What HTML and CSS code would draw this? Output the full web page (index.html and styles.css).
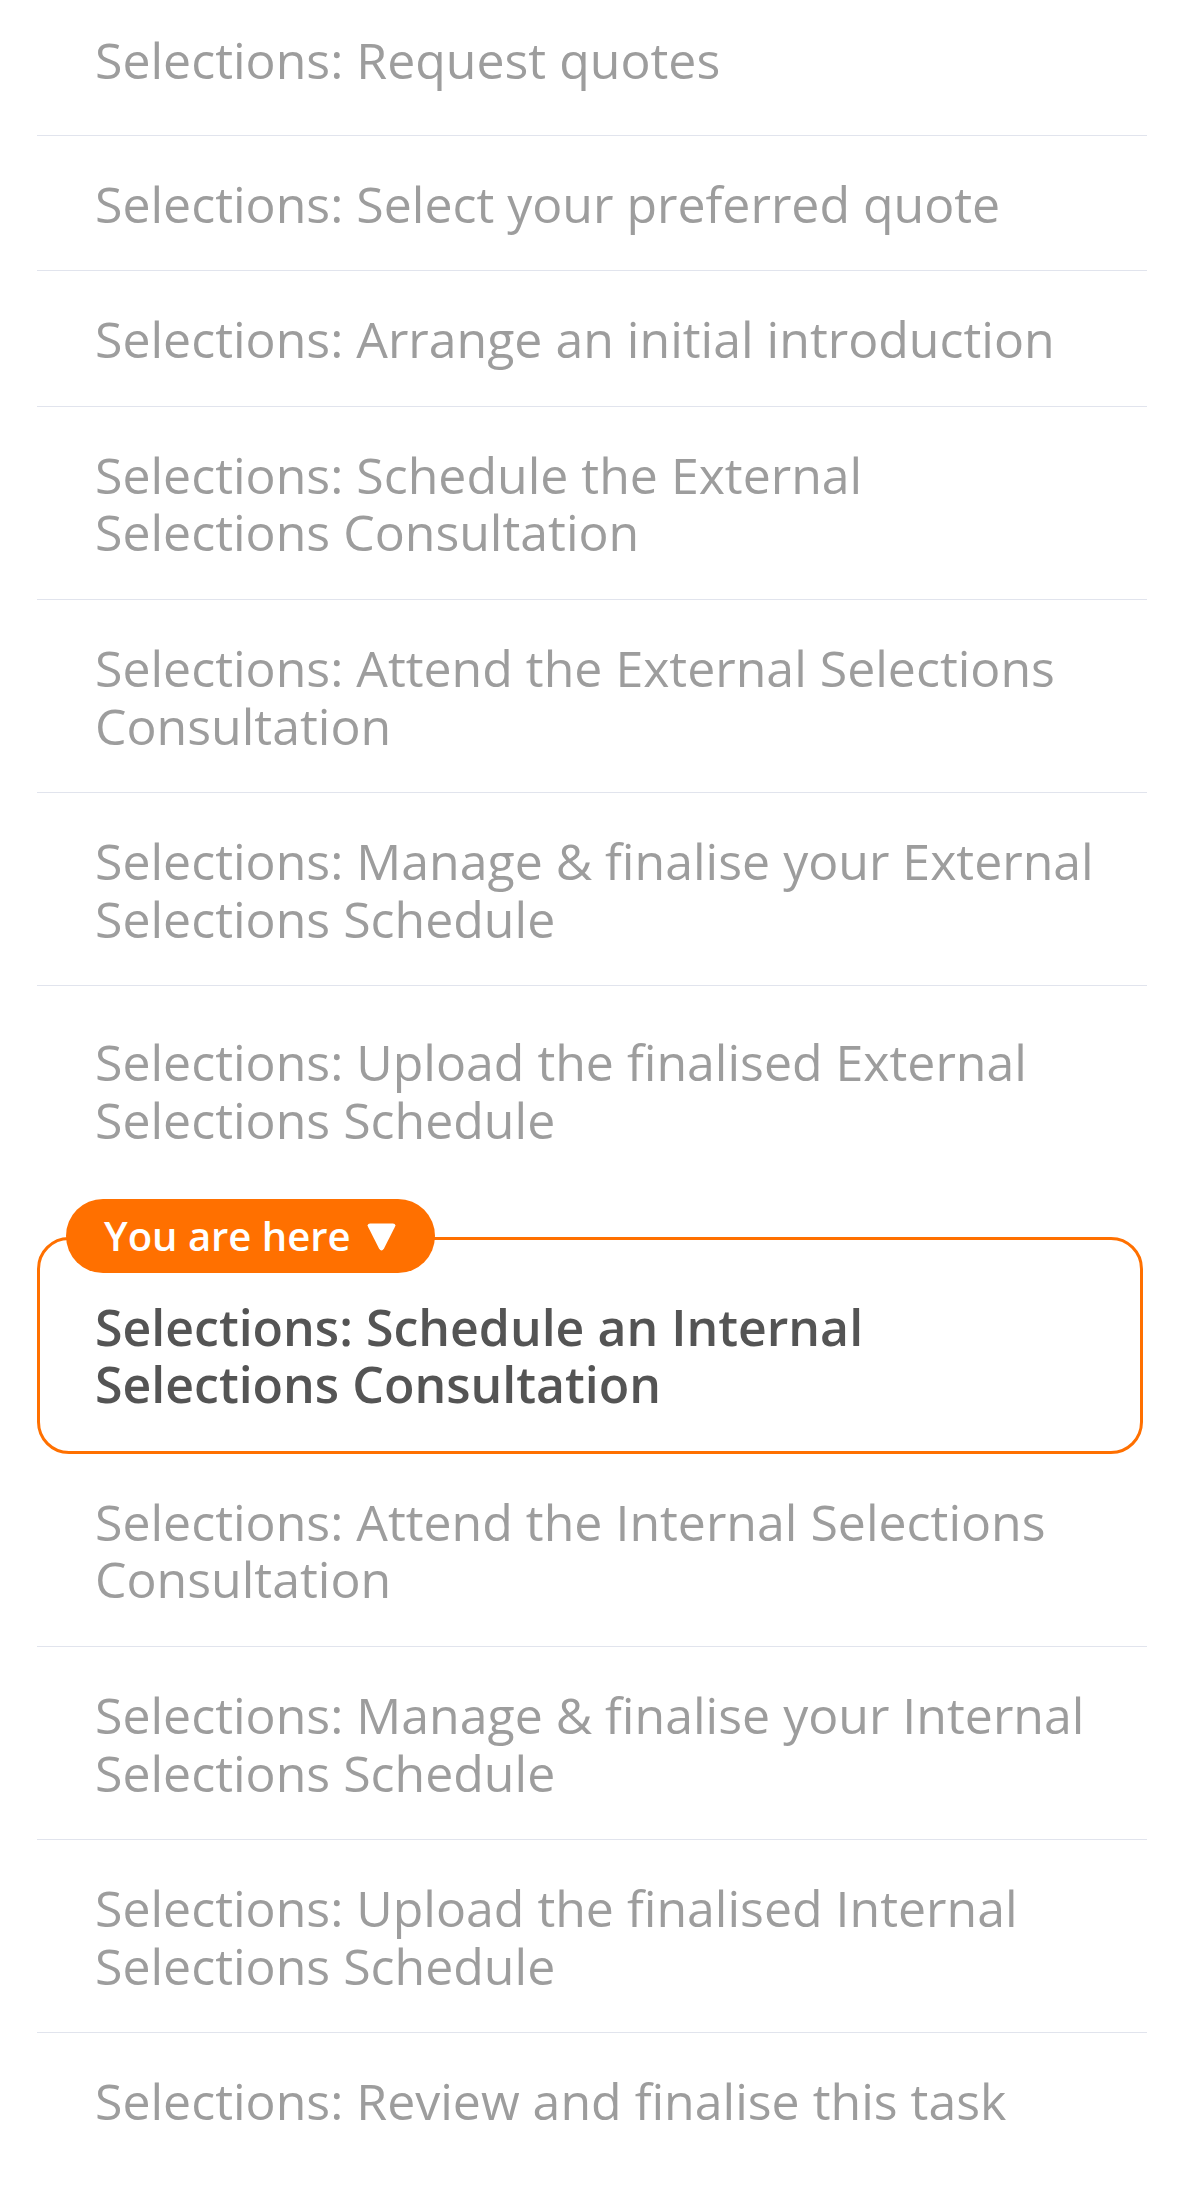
FILE: index.html
```html
<!DOCTYPE html>
<html lang="en">
<head>
<meta charset="utf-8">
<title>Selections steps</title>
<link rel="stylesheet" href="styles.css">
</head>
<body>
<ol class="steps">
  <li class="step"><span class="step-title">Selections: Request quotes</span></li>
  <li class="step"><span class="step-title">Selections: Select your preferred quote</span></li>
  <li class="step"><span class="step-title">Selections: Arrange an initial introduction</span></li>
  <li class="step"><span class="step-title">Selections: Schedule the External Selections Consultation</span></li>
  <li class="step"><span class="step-title">Selections: Attend the External Selections Consultation</span></li>
  <li class="step"><span class="step-title">Selections: Manage &amp; finalise your External Selections Schedule</span></li>
  <li class="step"><span class="step-title">Selections: Upload the finalised External Selections Schedule</span></li>
  <li class="step step--current">
    <span class="badge">You are here
      <svg class="badge-arrow" viewBox="0 0 30 30" aria-hidden="true"><path d="M4 2.5 H26 Q29.5 2.5 27.8 6 L17.4 26.6 Q15 30.5 12.6 26.6 L2.2 6 Q0.5 2.5 4 2.5 Z"/></svg>
    </span>
    <span class="step-title">Selections: Schedule an Internal Selections Consultation</span>
  </li>
  <li class="step"><span class="step-title">Selections: Attend the Internal Selections Consultation</span></li>
  <li class="step"><span class="step-title">Selections: Manage &amp; finalise your Internal Selections Schedule</span></li>
  <li class="step"><span class="step-title">Selections: Upload the finalised Internal Selections Schedule</span></li>
  <li class="step"><span class="step-title">Selections: Review and finalise this task</span></li>
</ol>
</body>
</html>
```

FILE: styles.css
```css
html, body {
  margin: 0;
  padding: 0;
  background: #ffffff;
}

body {
  font-family: "Open Sans", "DejaVu Sans", sans-serif;
}

.steps {
  list-style: none;
  margin: 0;
  padding: 0 31px 0 37px;
}

.step {
  padding: 40px 42px 37px 58px;
  border-bottom: 1px solid #e1e4ed;
  font-size: 50px;
  line-height: 57.6px;
  color: #9d9d9d;
}

.step:first-child {
  padding-top: 32px;
  padding-bottom: 45px;
}

.step:last-child {
  border-bottom: none;
}

.step:has(+ .step--current) {
  padding-top: 48px;
  border-bottom-color: transparent;
}

.step--current {
  position: relative;
  margin: 49px 4px 0 0;
  padding: 59px 38px 37px 55px;
  border: 3px solid #ff7000;
  border-radius: 32px;
  color: #545454;
  font-weight: 600;
}

.badge {
  position: absolute;
  left: 26px;
  top: -41px;
  height: 74px;
  box-sizing: border-box;
  display: inline-flex;
  align-items: center;
  gap: 15px;
  padding: 0 38px 0 38px;
  border-radius: 37px;
  background: #ff7000;
  color: #ffffff;
  font-size: 40px;
  font-weight: 600;
  line-height: 1;
  white-space: nowrap;
}

.badge-arrow {
  width: 31px;
  height: 31px;
  fill: #ffffff;
  margin-top: 2px;
}
```
